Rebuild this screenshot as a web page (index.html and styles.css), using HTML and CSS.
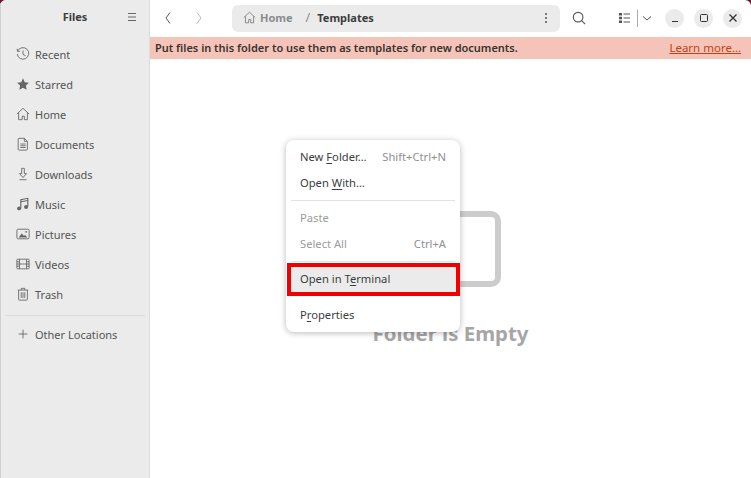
FILE: index.html
```html
<!DOCTYPE html>
<html>
<head>
    <meta charset="utf-8">
    <link rel="stylesheet" href="styles.css">
</head>
<body>
    <div class="window">
        <div class="sidebar">
            <div class="side-header">
                <div class="side-title">Files</div>
                <svg class="menu-icon" width="16" height="16" viewBox="0 0 16 16"><path d="M4 4.500h8M4 8h8M4 11.500h8" stroke="#666" fill="none"/></svg>
            </div>
            <div class="places">
                <div class="place">
                    <svg width="14" height="14" viewBox="0 0 16 16" fill="none" stroke="#666"><path d="M2 4.500A6.600 6.600 0 1 1 1.400 8"/><path d="M1.500 2v3h3M8 4v4.500l3 1.500"/></svg>
                    <span>Recent</span>
                </div>
                <div class="place">
                    <svg width="14" height="14" viewBox="0 0 16 16" fill="#666"><path d="M8 1.500l2 4.400 4.800.6-3.500 3.300.9 4.700L8 12.200l-4.200 2.300.9-4.700L1.200 6.500l4.800-.6z"/></svg>
                    <span>Starred</span>
                </div>
                <div class="place">
                    <svg width="14" height="14" viewBox="0 0 16 16" fill="none" stroke="#666"><path d="M1 8l7-6.500L15 8M3 6.500v8h4v-4h2.500v4H13v-8"/></svg>
                    <span>Home</span>
                </div>
                <div class="place">
                    <svg width="14" height="14" viewBox="0 0 16 16" fill="none" stroke="#666"><path d="M3.500 1.500h6l3.500 3.500v9a1 1 0 0 1-1 1h-8.500a1 1 0 0 1-1-1v-11.500a1 1 0 0 1 1-1zM9.500 1.500v3.500h3.500M5 8h6M5 10h6M5 12h6"/></svg>
                    <span>Documents</span>
                </div>
                <div class="place">
                    <svg width="14" height="14" viewBox="0 0 16 16" fill="none" stroke="#666"><path d="M6.500 1.500h3v6h2.500l-4 4.500-4-4.500h2.500zM4 14.500h8"/></svg>
                    <span>Downloads</span>
                </div>
                <div class="place">
                    <svg width="14" height="14" viewBox="0 0 16 16" fill="none" stroke="#666" stroke-width="1.300"><path d="M5.500 13V3l8-1.500V11M5.500 5.500l8-1.500"/><circle cx="3.500" cy="13" r="1.600" fill="#666"/><circle cx="11.500" cy="11.500" r="1.600" fill="#666"/></svg>
                    <span>Music</span>
                </div>
                <div class="place">
                    <svg width="14" height="14" viewBox="0 0 16 16" fill="none" stroke="#666"><rect x="1" y="2.500" width="14" height="11" rx="1.500"/><path d="M3 12l3.500-4.500 2.500 2.500 1.500-1 2.500 3z" fill="#666" stroke="none"/><circle cx="11.500" cy="5.500" r="1" fill="#666" stroke="none"/></svg>
                    <span>Pictures</span>
                </div>
                <div class="place">
                    <svg width="14" height="14" viewBox="0 0 16 16" fill="none" stroke="#666"><rect x="1" y="2.500" width="14" height="11" rx="1"/><path d="M4 2.500v11M12 2.500v11M4 8h8M1 5.500h3M1 8h3M1 10.500h3M12 5.500h3M12 8h3M12 10.500h3"/></svg>
                    <span>Videos</span>
                </div>
                <div class="place">
                    <svg width="14" height="14" viewBox="0 0 16 16" fill="none" stroke="#666"><path d="M2 3.500h12M6 3.500v-2h4v2M3 3.500v10.500a1 1 0 0 0 1 1h8a1 1 0 0 0 1-1V3.500M6 6v6.500M8 6v6.500M10 6v6.500"/></svg>
                    <span>Trash</span>
                </div>
            </div>
            <div class="side-sep"></div>
            <div class="place">
                <svg width="14" height="14" viewBox="0 0 16 16" fill="none" stroke="#666"><path d="M8 3v10M3 8h10"/></svg>
                <span>Other Locations</span>
            </div>
        </div>

        <div class="main">
            <div class="toolbar">
                <div class="nav-btn">
                    <svg width="16" height="16" viewBox="0 0 16 16" fill="none" stroke="#555"><path d="M10 2.500L6 8l4 5.500"/></svg>
                </div>
                <div class="nav-btn next">
                    <svg width="16" height="16" viewBox="0 0 16 16" fill="none" stroke="#bbb"><path d="M6 2.500L10 8l-4 5.500"/></svg>
                </div>
                <div class="pathbar">
                    <svg width="13" height="13" viewBox="0 0 16 16" fill="none" stroke="#777"><path d="M1 8l7-6.500L15 8M3 6.500v8h4v-4h2.500v4H13v-8"/></svg>
                    <span class="crumb">Home</span>
                    <span class="slash">/</span>
                    <span class="crumb current">Templates</span>
                    <svg class="path-more" width="4" height="12" viewBox="0 0 4 12" fill="#555"><circle cx="2" cy="2" r="1"/><circle cx="2" cy="6" r="1"/><circle cx="2" cy="10" r="1"/></svg>
                </div>
                <div class="search-btn">
                    <svg width="14" height="14" viewBox="0 0 16 16" fill="none" stroke="#555" stroke-width="1.300"><circle cx="7" cy="7" r="5.500"/><path d="M11 11l4 4"/></svg>
                </div>
                <div class="view-btn">
                    <svg width="12" height="12" viewBox="0 0 12 12" fill="#555"><path d="M0 1h3v2.500H0zM0 4.800h3v2.500H0zM0 8.500h3V11H0z"/><path d="M4.500 1.500H11v1H4.500zM4.500 5.500H11v1H4.500zM4.500 9.500H11v1H4.500z"/></svg>
                    <div class="view-sep"></div>
                    <svg width="10" height="10" viewBox="0 0 10 10" fill="none" stroke="#555"><path d="M1 3.500L5 7l4-3.500"/></svg>
                </div>
                <div class="win-btns">
                    <div class="win-btn"><svg width="10" height="10" viewBox="0 0 10 10" stroke="#333" fill="none"><path d="M2 8.500h6"/></svg></div>
                    <div class="win-btn"><svg width="10" height="10" viewBox="0 0 10 10" stroke="#333" fill="none"><rect x="1.500" y="1.500" width="7" height="7" rx="1"/></svg></div>
                    <div class="win-btn"><svg width="10" height="10" viewBox="0 0 10 10" stroke="#333" stroke-width="1.300" fill="none"><path d="M1.500 1.500l7 7M8.500 1.500l-7 7"/></svg></div>
                </div>
            </div>

            <div class="banner">
                <span class="banner-text">Put files in this folder to use them as templates for new documents.</span>
                <span class="learn">Learn more…</span>
            </div>

            <div class="content">
                <div class="empty">
                    <div class="folder-shape"></div>
                    <div class="empty-title">Folder is Empty</div>
                </div>

                <div class="context-menu">
                    <div class="item"><span>New <u>F</u>older…</span><span class="accel">Shift+Ctrl+N</span></div>
                    <div class="item"><span>Open <u>W</u>ith…</span></div>
                    <div class="menu-sep"></div>
                    <div class="item disabled"><span>Paste</span></div>
                    <div class="item disabled"><span>Select All</span><span class="accel">Ctrl+A</span></div>
                    <div class="menu-sep tight"></div>
                    <div class="item highlight"><span>Open in T<u>e</u>rminal</span></div>
                    <div class="item last"><span>P<u>r</u>operties</span></div>
                </div>
            </div>
        </div>
    </div>
</body>
</html>
```

FILE: styles.css
```css
* {
    margin: 0;
    padding: 0;
    box-sizing: border-box;
}

html, body {
    width: 751px;
    height: 478px;
    overflow: hidden;
}

body {
    font-family: "Noto Sans", "Open Sans", sans-serif;
    font-size: 11px;
    color: #3d3d3d;
    background: #6a1030;
}

.window {
    display: flex;
    width: 751px;
    height: 478px;
    background: #fff;
    border-radius: 6px 6px 0 0;
    overflow: hidden;
}

.sidebar {
    width: 150px;
    flex-shrink: 0;
    background: #ebebeb;
    border-left: 1px solid #d0d0d0;
    border-right: 1px solid #dcdcdc;
    color: #555;
}

.side-header {
    position: relative;
    height: 33px;
    display: flex;
    align-items: center;
    justify-content: center;
}

.side-title {
    font-weight: 700;
    color: #3d3d3d;
}

.menu-icon {
    position: absolute;
    left: 123px;
    top: 9px;
}

.places {
    padding-top: 6px;
}

.place {
    display: flex;
    align-items: center;
    gap: 5px;
    height: 30px;
    padding-left: 15px;
}

.side-sep {
    height: 1px;
    margin: 6px 4px 3px 4px;
    background: #dadada;
}

.main {
    flex: 1;
    display: flex;
    flex-direction: column;
    min-width: 0;
}

.toolbar {
    display: flex;
    align-items: center;
    height: 37px;
    flex-shrink: 0;
    padding-bottom: 1px;
}

.nav-btn {
    width: 16px;
    margin-left: 10px;
    display: flex;
}

.nav-btn.next {
    margin-left: 15px;
}

.pathbar {
    display: flex;
    align-items: center;
    width: 328px;
    height: 27px;
    margin-left: 25px;
    padding: 0 11px 1px;
    background: #ebebeb;
    border-radius: 6px;
    font-weight: 700;
}

.crumb {
    color: #8c8c8c;
    margin-left: 4px;
}

.crumb.current {
    color: #3d3d3d;
    margin-left: 0;
}

.slash {
    margin: 0 7px 0 13px;
    color: #8c8c8c;
    font-weight: 400;
    font-size: 12.5px;
}

.path-more {
    margin-left: auto;
    margin-right: 1px;
}

.search-btn {
    display: flex;
    margin-left: 12px;
}

.view-btn {
    display: flex;
    align-items: center;
    margin-left: 33px;
}

.view-sep {
    width: 1px;
    height: 17px;
    margin: 0 4px 0 6px;
    background: #aaa;
}

.win-btns {
    display: flex;
    gap: 10px;
    margin-left: 13px;
}

.win-btn {
    display: flex;
    align-items: center;
    justify-content: center;
    width: 19px;
    height: 19px;
    border-radius: 50%;
    background: #ebebeb;
}

.banner {
    display: flex;
    align-items: center;
    justify-content: space-between;
    height: 22px;
    flex-shrink: 0;
    padding: 0 10px 2px 5px;
    background: #f5c4b8;
}

.banner-text {
    font-weight: 600;
    font-size: 11px;
    color: #3a3230;
}

.learn {
    color: #c34113;
    font-size: 11.5px;
    text-decoration: underline;
}

.content {
    position: relative;
    flex: 1;
    display: flex;
    justify-content: center;
}

.empty {
    display: flex;
    flex-direction: column;
    align-items: center;
    padding-top: 152px;
}

.folder-shape {
    width: 100px;
    height: 76px;
    border: 6px solid #cccccc;
    border-radius: 10px;
}

.empty-title {
    margin-top: 33px;
    font-size: 20.4px;
    line-height: 26px;
    font-weight: 700;
    color: #a6a6a6;
}

.context-menu {
    position: absolute;
    left: 136px;
    top: 81px;
    width: 174px;
    height: 192px;
    padding: 4px 0 4px 1px;
    background: #fff;
    border-radius: 8px;
    box-shadow: 0 1px 6px rgba(0, 0, 0, 0.28);
}

.item {
    display: flex;
    justify-content: space-between;
    align-items: center;
    height: 26px;
    padding: 0 14px 2px 13px;
    font-size: 11.2px;
    color: #3d3d3d;
}

.item u {
    text-underline-offset: 2px;
}

.accel {
    color: #8f8f8f;
}

.item.disabled {
    color: #9c9c9c;
}

.menu-sep {
    height: 1px;
    margin: 4px 5px 4px 4px;
    background: #e2e2e2;
}

.menu-sep.tight {
    margin: 4px 5px 1px 4px;
}

.item.highlight {
    height: 33px;
    padding: 0 9px 2px;
    background: #ebebeb;
    border: 4px solid #f00000;
}

.item.last {
    margin-top: 6px;
}
```
